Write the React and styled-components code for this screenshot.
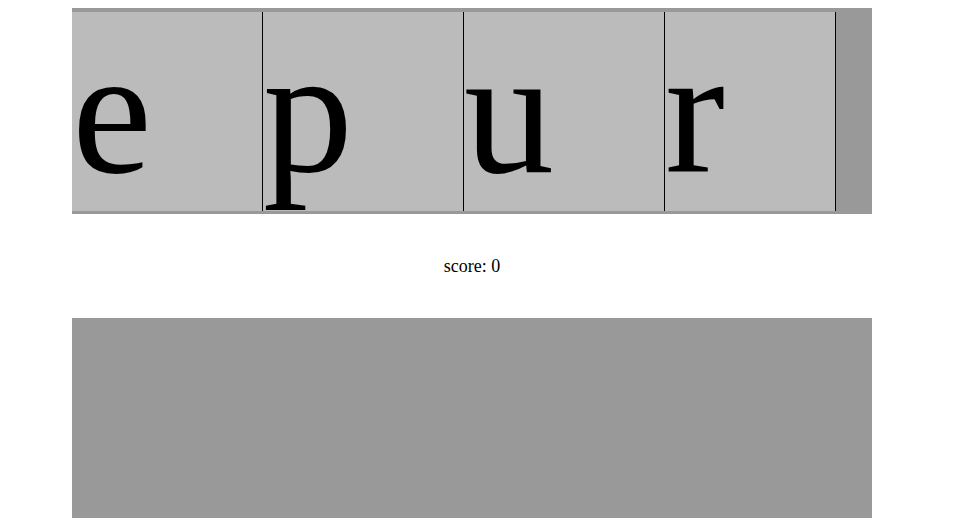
import React from 'react';
import styled, { createGlobalStyle } from 'styled-components';

const GlobalStyle = createGlobalStyle`
  html {
    overflow: hidden;
  }
  body {
    margin: 8px;
    background: #fff;
    font-family: "Liberation Serif", "Times New Roman", serif;
    color: #000;
  }
`;

const Game = styled.div`
  width: 800px;
  margin-left: 64px;
`;

const Strip = styled.div`
  display: flex;
  background: #999;
  padding: 4px 0 3px;
  overflow: hidden;
`;

const Tile = styled.div`
  flex: none;
  width: ${(p) => p.$width}px;
  height: 199px;
  background: #bbb;
  border-left: ${(p) => (p.$first ? 'none' : '1px solid #000')};
  border-right: ${(p) => (p.$last ? '1px solid #000' : 'none')};
  font-size: 180px;
  line-height: 199px;
  white-space: nowrap;
`;

const Score = styled.div`
  height: 18px;
  padding: 44px 0 42px;
  text-align: center;
  font-size: 18px;
  line-height: 17px;
`;

const Field = styled.div`
  height: 200px;
  background: #999;
`;

const letters = [
  { ch: 'e', width: 190 },
  { ch: 'p', width: 200 },
  { ch: 'u', width: 200 },
  { ch: 'r', width: 170 },
];

export default function App() {
  return (
    <>
      <GlobalStyle />
      <Game>
        <Strip>
          {letters.map((l, i) => (
            <Tile
              key={i}
              $width={l.width}
              $first={i === 0}
              $last={i === letters.length - 1}
            >
              {l.ch}
            </Tile>
          ))}
        </Strip>
        <Score>score: 0</Score>
        <Field />
      </Game>
    </>
  );
}
